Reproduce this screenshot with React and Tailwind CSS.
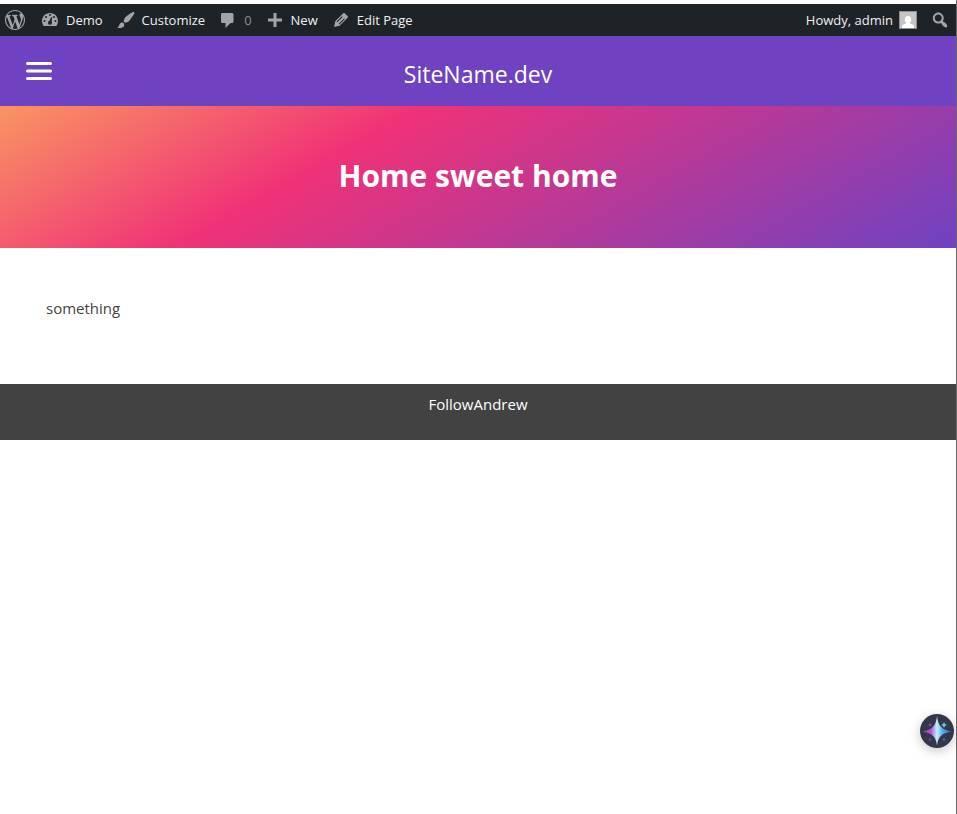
const ICONS = {
  wordpress:
    "M20 10c0-5.51-4.49-10-10-10C4.48 0 0 4.49 0 10c0 5.52 4.48 10 10 10 5.51 0 10-4.48 10-10zM7.78 15.37L4.37 6.22c.55-.02 1.17-.08 1.17-.08.5-.06.44-1.13-.06-1.11 0 0-1.45.11-2.37.11-.18 0-.37 0-.58-.01C4.12 2.69 6.87 1.11 10 1.11c2.33 0 4.45.87 6.05 2.34-.68-.11-1.65.39-1.65 1.58 0 .74.45 1.36.9 2.1.35.61.55 1.36.55 2.46 0 1.49-1.4 5-1.4 5l-3.03-8.37c.54-.02.82-.17.82-.17.5-.05.44-1.25-.06-1.22 0 0-1.44.12-2.38.12-.87 0-2.33-.12-2.33-.12-.5-.03-.56 1.2-.06 1.22l.92.08 1.26 3.41zM17.41 10c.24-.64.74-1.87.43-4.25.7 1.29 1.05 2.71 1.05 4.25 0 3.29-1.73 6.24-4.4 7.78.97-2.59 1.94-5.2 2.92-7.78zM6.1 18.09C3.12 16.65 1.11 13.53 1.11 10c0-1.3.23-2.48.72-3.59C3.25 10.3 4.67 14.2 6.1 18.09zm4.03-6.63l2.58 6.98c-.86.29-1.76.45-2.71.45-.79 0-1.57-.11-2.29-.33.81-2.38 1.62-4.74 2.42-7.1z",
  dashboard:
    "M3.76 16h12.48c1.1-1.37 1.76-3.11 1.76-5 0-4.42-3.58-8-8-8s-8 3.58-8 8c0 1.89.66 3.63 1.76 5zM9 5a1 1 0 1 0 2 0a1 1 0 1 0-2 0zM5 7a1 1 0 1 0 2 0a1 1 0 1 0-2 0zM13 7a1 1 0 1 0 2 0a1 1 0 1 0-2 0zM3.5 11a1 1 0 1 0 2 0a1 1 0 1 0-2 0zM14.5 11a1 1 0 1 0 2 0a1 1 0 1 0-2 0zM11.3 7l.9.3-.6 4.200c.3.4.4.8.4 1.300a2 2 0 1 1-2.500-1.940z",
  brush:
    "M18.33 3.57s.27-.8-.31-1.36c-.53-.52-1.22-.24-1.22-.24-.61.3-5.76 3.47-7.67 5.57-.86.96-2.06 3.79-1.09 4.82.92.98 3.96-.17 4.79-1 2.06-2.06 5.21-7.17 5.5-7.79zM1.4 17.65c2.37-1.56 1.46-3.41 3.23-4.64.93-.65 2.22-.62 3.08.29.63.67.8 2.57-.16 3.46-1.57 1.45-4 1.55-6.15.89z",
  comment:
    "M4.500 3h9.500c.8 0 1.500.7 1.500 1.500v7c0 .8-.7 1.500-1.500 1.500h-1.500l-5 5v-5h-3c-.8 0-1.500-.7-1.500-1.500v-7c0-.8.7-1.500 1.500-1.500z",
  plus: "M17 8.500v3h-5.500V17h-3v-5.500H3v-3h5.500V3h3v5.500z",
  edit: "M13.89 3.39l2.71 2.72c.46.46.42 1.24.03 1.64l-8.01 8.02-5.56 1.16 1.16-5.58s7.6-7.63 7.99-8.03c.39-.39 1.22-.39 1.68.07zM10.900 6.200l-5.300 5.300.7.700 5.300-5.300zM13.100 8.400l-5.300 5.300.7.700 5.300-5.300z",
  search:
    "M12.14 4.18c1.87 1.87 2.11 4.75.72 6.89.12.1.22.21.36.31.2.16.47.36.81.59.34.24.56.39.66.47.42.31.73.57.94.78.32.32.6.65.84 1 .25.35.44.69.59 1.04.14.35.21.68.18 1-.02.32-.14.59-.36.81s-.49.34-.81.36c-.31.02-.65-.04-.99-.19-.35-.14-.7-.34-1.04-.59-.35-.24-.68-.52-1-.84-.21-.21-.47-.52-.77-.93-.1-.13-.25-.35-.47-.66-.22-.32-.4-.57-.56-.78-.16-.2-.29-.35-.44-.5-2.07 1.09-4.69.76-6.44-.98-2.14-2.15-2.14-5.64 0-7.78 2.15-2.15 5.63-2.15 7.78 0zm-1.41 6.36c1.36-1.37 1.36-3.58 0-4.95-1.37-1.37-3.59-1.37-4.95 0-1.37 1.37-1.37 3.58 0 4.95 1.36 1.37 3.58 1.37 4.95 0z",
};

function Icon({ name }) {
  return (
    <svg viewBox="0 0 20 20" className="size-5 shrink-0 fill-[#a0a5aa]" aria-hidden="true">
      <path fillRule="evenodd" d={ICONS[name]} />
    </svg>
  );
}

function BarLink({ icon, children, muted }) {
  return (
    <a href="#" className="flex items-center gap-1.5">
      <Icon name={icon} />
      <span className={muted ? "pt-0.5 text-[#8a8f94]" : "pt-0.5 text-[#f0f0f1]"}>{children}</span>
    </a>
  );
}

function AdminBar() {
  return (
    <nav className="flex h-8 items-center justify-between bg-[#1d2327] pr-1.5 pl-[5px] text-[13px] whitespace-nowrap">
      <div className="flex items-center gap-[13px]">
        <a href="#" aria-label="About WordPress" className="pr-0.5">
          <Icon name="wordpress" />
        </a>
        <BarLink icon="dashboard">Demo</BarLink>
        <BarLink icon="brush">Customize</BarLink>
        <BarLink icon="comment" muted>0</BarLink>
        <BarLink icon="plus">New</BarLink>
        <BarLink icon="edit">Edit Page</BarLink>
      </div>
      <div className="flex items-center gap-[13px]">
        <a href="#" className="flex items-center gap-1.5 text-[#f0f0f1]">
          <span className="pt-0.5">Howdy, admin</span>
          <svg viewBox="0 0 18 18" className="size-[18px]" aria-hidden="true">
            <path fill="#8c8f94" d="M0 0h18v18H0z" />
            <path fill="#c5c5c5" d="M1 1h16v16H1z" />
            <path fill="#fff" d="M9 5c2 0 3.200 1.500 3.200 3.400 0 1.500-.7 2.500-1.500 3.100v.8l3.300 1.500c.7.400 1 .9 1 1.600V17H3v-1.600c0-.7.300-1.200 1-1.600l3.300-1.500v-.8c-.8-.6-1.500-1.600-1.500-3.100C5.800 6.500 7 5 9 5z" />
          </svg>
        </a>
        <button type="button" aria-label="Search">
          <Icon name="search" />
        </button>
      </div>
    </nav>
  );
}

function AssistantButton() {
  return (
    <button
      type="button"
      aria-label="Open assistant"
      className="fixed right-[3px] bottom-[66px] size-[34px] rounded-full shadow-[0_3px_12px_rgba(0,0,0,0.22)]"
    >
      <svg viewBox="0 0 34 34" className="size-full" aria-hidden="true">
        <defs>
          <linearGradient id="spark" x1="0" x2="1" y1="0" y2="0">
            <stop offset="0" stopColor="#9a2fb0" />
            <stop offset="0.3" stopColor="#b552d8" />
            <stop offset="0.5" stopColor="#c5efff" />
            <stop offset="0.68" stopColor="#4fb0ea" />
            <stop offset="1" stopColor="#2468b0" />
          </linearGradient>
        </defs>
        <circle cx="17" cy="17" r="17" fill="#34364a" />
        <path fill="url(#spark)" d="M17 2c1 9.500 4.500 14 15 15.500C21.500 19 18 23 17 31.500 16 23 12.500 19 2 17.500 12.500 16 16 11.500 17 2z" />
        <path fill="#8a45a5" d="M10 9l.8 1.200 1.200.8-1.200.8-.8 1.200-.8-1.200-1.200-.8 1.200-.8z" />
        <path fill="#68c5dc" d="M24 8l1 2 2 1-2 1-1 2-1-2-2-1 2-1z" />
        <path fill="#6d4488" d="M10 23.500l.8 1.200 1.200.8-1.200.8-.8 1.200-.8-1.200-1.200-.8 1.200-.8z" />
        <path fill="#336c9c" d="M24 23.500l.8 1.200 1.200.8-1.200.8-.8 1.200-.8-1.200-1.200-.8 1.200-.8z" />
      </svg>
    </button>
  );
}

export default function App() {
  return (
    <div className="min-h-screen border-r border-[#66686c] bg-white pt-1 font-['Open_Sans','Noto_Sans',sans-serif] text-[#444]">
      <AdminBar />
      <header className="grid h-[70px] grid-cols-[1fr_auto_1fr] items-center bg-[#6f42c1] px-[26px] text-white">
        <button type="button" aria-label="Menu" className="w-[26px]">
          <svg viewBox="0 0 26 18" className="h-[18px] w-[26px]" aria-hidden="true">
            <path stroke="currentColor" strokeWidth="3" strokeLinecap="round" d="M1.500 1.500h23M1.500 9h23M1.500 16.500h23" />
          </svg>
        </button>
        <a href="#" className="pt-1.5 text-[23px]">SiteName.dev</a>
      </header>
      <section className="bg-[linear-gradient(150deg,#f99562_0%,#f03277_35%,#6f42c1_100%)] pt-[46px] pb-12 text-center text-white">
        <h1 className="text-[30px] leading-12 font-bold">Home sweet home</h1>
      </section>
      <main className="px-[46px] pt-12 pb-16">
        <p className="text-[15px] leading-6">something</p>
      </main>
      <footer className="h-14 bg-[#424242] pt-2 text-center text-[15px] leading-6 text-white">
        <p>FollowAndrew</p>
      </footer>
      <AssistantButton />
    </div>
  );
}
